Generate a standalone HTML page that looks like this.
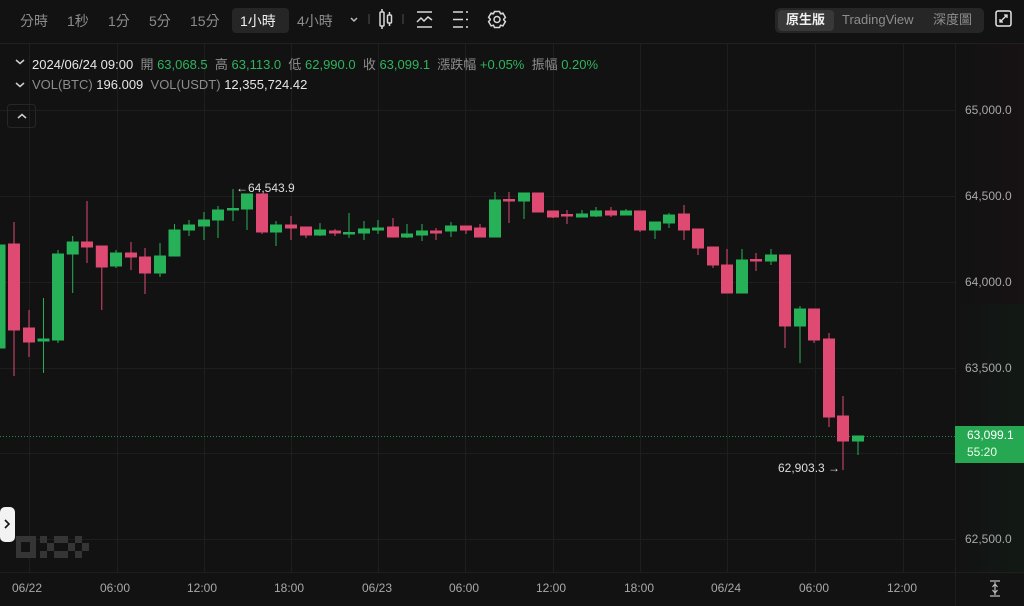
<!DOCTYPE html>
<html><head><meta charset="utf-8"><style>
*{margin:0;padding:0;box-sizing:border-box}
body{width:1024px;height:606px;background:#121212;overflow:hidden;position:relative;font-family:"Liberation Sans","Noto Sans CJK TC",sans-serif;color:#8a8a8a}
.a{position:absolute;white-space:nowrap}
.tb{font-size:14px;top:11px;color:#8d8d8d}
.inf{font-size:13px;color:#8d8d8d}
.w{color:#e6e6e6}.g{color:#2fb35e}
.ax{font-size:12px;color:#a8a8a8}
.sg{top:9px;height:21px;line-height:21px;font-size:13px;color:#8d8d8d}
</style></head><body>
<svg class="a" style="left:0;top:0" width="1024" height="606">
<defs><linearGradient id="rg" x1="0" x2="1"><stop offset="0" stop-color="#121212"/><stop offset="1" stop-color="#171214"/></linearGradient>
<linearGradient id="gg" x1="0" x2="1"><stop offset="0" stop-color="#121212"/><stop offset="1" stop-color="#121915"/></linearGradient></defs>
<rect x="955" y="44" width="69" height="260" fill="url(#rg)"/>
<rect x="955" y="304" width="69" height="270" fill="url(#gg)"/>
<line x1="0" y1="43.5" x2="1024" y2="43.5" stroke="#202020"/>
<g stroke="#1e1e1e" stroke-width="1">
<line x1="0" y1="110.5" x2="955" y2="110.5"/><line x1="0" y1="196.5" x2="955" y2="196.5"/><line x1="0" y1="282.5" x2="955" y2="282.5"/><line x1="0" y1="368.5" x2="955" y2="368.5"/><line x1="0" y1="453.5" x2="955" y2="453.5"/><line x1="0" y1="539.5" x2="955" y2="539.5"/>
<line x1="29.5" y1="44" x2="29.5" y2="572"/><line x1="117.5" y1="44" x2="117.5" y2="572"/><line x1="204.5" y1="44" x2="204.5" y2="572"/><line x1="291.5" y1="44" x2="291.5" y2="572"/><line x1="378.5" y1="44" x2="378.5" y2="572"/><line x1="465.5" y1="44" x2="465.5" y2="572"/><line x1="553.5" y1="44" x2="553.5" y2="572"/><line x1="640.5" y1="44" x2="640.5" y2="572"/><line x1="727.5" y1="44" x2="727.5" y2="572"/><line x1="815.5" y1="44" x2="815.5" y2="572"/><line x1="903.5" y1="44" x2="903.5" y2="572"/>
<line x1="955.5" y1="44" x2="955.5" y2="606"/><line x1="0" y1="572.5" x2="1024" y2="572.5"/>
</g>
<line x1="0" y1="436.5" x2="955" y2="436.5" stroke="#2fb35e" stroke-dasharray="1 2" opacity=".7"/>
<g stroke="#26b158" fill="#26b158">
<rect x="-3" y="245" width="8" height="103"/>
<line x1="43.5" y1="298" x2="43.5" y2="373"/><rect x="38" y="339" width="11" height="2"/>
<line x1="58" y1="250" x2="58" y2="343"/><rect x="52.5" y="254" width="11" height="86"/>
<line x1="72.7" y1="236" x2="72.7" y2="293"/><rect x="67.2" y="242" width="11" height="12"/>
<line x1="116" y1="250" x2="116" y2="268"/><rect x="110.5" y="253" width="11" height="13"/>
<line x1="160" y1="243" x2="160" y2="277"/><rect x="154.5" y="256" width="11" height="17"/>
<line x1="174.5" y1="224" x2="174.5" y2="256"/><rect x="169" y="230" width="11" height="26"/>
<line x1="189" y1="220" x2="189" y2="236"/><rect x="183.5" y="225" width="11" height="5"/>
<line x1="204" y1="212" x2="204" y2="240"/><rect x="198.5" y="220" width="11" height="6"/>
<line x1="218" y1="206" x2="218" y2="238"/><rect x="212.5" y="210" width="11" height="10"/>
<line x1="233" y1="189" x2="233" y2="221"/><rect x="227.5" y="208.5" width="11" height="1.5"/>
<line x1="247" y1="194" x2="247" y2="230"/><rect x="241.5" y="194" width="11" height="15"/>
<line x1="276" y1="221" x2="276" y2="246"/><rect x="270.5" y="225" width="11" height="7"/>
<line x1="320" y1="223" x2="320" y2="236"/><rect x="314.5" y="230" width="11" height="5"/>
<line x1="349" y1="213" x2="349" y2="238"/><rect x="343.5" y="232.5" width="11" height="1.5"/>
<line x1="364" y1="221" x2="364" y2="240"/><rect x="358.5" y="229" width="11" height="4"/>
<line x1="378" y1="220" x2="378" y2="234"/><rect x="372.5" y="228" width="11" height="2"/>
<line x1="407" y1="224" x2="407" y2="238"/><rect x="401.5" y="234" width="11" height="3"/>
<line x1="422" y1="224" x2="422" y2="241"/><rect x="416.5" y="231" width="11" height="4"/>
<line x1="451" y1="222" x2="451" y2="237"/><rect x="445.5" y="226" width="11" height="5"/>
<line x1="495" y1="192" x2="495" y2="237"/><rect x="489.5" y="200" width="11" height="37"/>
<line x1="524" y1="193" x2="524" y2="219"/><rect x="518.5" y="193" width="11" height="8"/>
<line x1="582" y1="210" x2="582" y2="217"/><rect x="576.5" y="214" width="11" height="3"/>
<line x1="596" y1="207" x2="596" y2="217"/><rect x="590.5" y="211" width="11" height="5"/>
<line x1="626" y1="209" x2="626" y2="215"/><rect x="620.5" y="211" width="11" height="4"/>
<line x1="655" y1="222" x2="655" y2="239"/><rect x="649.5" y="222" width="11" height="8"/>
<line x1="669" y1="213" x2="669" y2="228"/><rect x="663.5" y="215" width="11" height="8"/>
<line x1="742" y1="249" x2="742" y2="293"/><rect x="736.5" y="260" width="11" height="33"/>
<line x1="771" y1="249" x2="771" y2="265"/><rect x="765.5" y="255" width="11" height="6"/>
<line x1="800" y1="306" x2="800" y2="363"/><rect x="794.5" y="309" width="11" height="17"/>
<line x1="858" y1="436" x2="858" y2="455"/><rect x="852.5" y="436" width="11" height="5"/>
</g>
<g stroke="#df4a72" fill="#df4a72">
<line x1="14" y1="222" x2="14" y2="376"/><rect x="8.5" y="244" width="11" height="86"/>
<line x1="29" y1="310" x2="29" y2="357"/><rect x="23.5" y="328" width="11" height="14"/>
<line x1="87" y1="201" x2="87" y2="263"/><rect x="81.5" y="242" width="11" height="5"/>
<line x1="101.8" y1="246" x2="101.8" y2="310"/><rect x="96.3" y="246" width="11" height="21"/>
<line x1="131" y1="242" x2="131" y2="270"/><rect x="125.5" y="253" width="11" height="4"/>
<line x1="145" y1="248" x2="145" y2="294"/><rect x="139.5" y="257" width="11" height="16"/>
<line x1="262" y1="194" x2="262" y2="234"/><rect x="256.5" y="194" width="11" height="38"/>
<line x1="291" y1="216" x2="291" y2="240"/><rect x="285.5" y="225" width="11" height="3"/>
<line x1="306" y1="227" x2="306" y2="238"/><rect x="300.5" y="227" width="11" height="8"/>
<line x1="335" y1="229" x2="335" y2="236"/><rect x="329.5" y="231" width="11" height="2"/>
<line x1="393" y1="218" x2="393" y2="237"/><rect x="387.5" y="227" width="11" height="10"/>
<line x1="436" y1="228" x2="436" y2="240"/><rect x="430.5" y="231" width="11" height="2"/>
<line x1="466" y1="226" x2="466" y2="234"/><rect x="460.5" y="226" width="11" height="4"/>
<line x1="480" y1="224" x2="480" y2="237"/><rect x="474.5" y="228" width="11" height="9"/>
<line x1="509" y1="192" x2="509" y2="223"/><rect x="503.5" y="199.5" width="11" height="1.5"/>
<line x1="538" y1="193" x2="538" y2="212"/><rect x="532.5" y="193" width="11" height="19"/>
<line x1="553" y1="211" x2="553" y2="218"/><rect x="547.5" y="211" width="11" height="6"/>
<line x1="567" y1="210" x2="567" y2="224"/><rect x="561.5" y="214.5" width="11" height="1.5"/>
<line x1="611" y1="207" x2="611" y2="217"/><rect x="605.5" y="211" width="11" height="4"/>
<line x1="640" y1="211" x2="640" y2="232"/><rect x="634.5" y="211" width="11" height="19"/>
<line x1="684" y1="205" x2="684" y2="240"/><rect x="678.5" y="214" width="11" height="16"/>
<line x1="698" y1="229" x2="698" y2="255"/><rect x="692.5" y="229" width="11" height="19"/>
<line x1="713" y1="247" x2="713" y2="268"/><rect x="707.5" y="247" width="11" height="18"/>
<line x1="727" y1="249" x2="727" y2="293"/><rect x="721.5" y="265" width="11" height="28"/>
<line x1="756" y1="253" x2="756" y2="271"/><rect x="750.5" y="259.5" width="11" height="1.5"/>
<line x1="785" y1="255" x2="785" y2="348"/><rect x="779.5" y="255" width="11" height="71"/>
<line x1="814" y1="309" x2="814" y2="343"/><rect x="808.5" y="309" width="11" height="31"/>
<line x1="829" y1="333" x2="829" y2="427"/><rect x="823.5" y="339" width="11" height="78"/>
<line x1="843" y1="396" x2="843" y2="470"/><rect x="837.5" y="416" width="11" height="25"/>
</g>
<rect x="955" y="426" width="69" height="37" fill="#26a852"/>
<g fill="#353535"><rect x="16" y="536" width="20" height="22"/><rect x="40" y="536" width="7" height="7"/><rect x="40" y="551" width="7" height="7"/><rect x="47" y="543" width="7" height="8"/><rect x="54" y="536" width="7" height="7"/><rect x="54" y="551" width="7" height="7"/><rect x="61" y="536" width="7" height="7"/><rect x="61" y="551" width="7" height="7"/><rect x="68" y="543" width="7" height="8"/><rect x="75" y="536" width="7" height="7"/><rect x="75" y="551" width="7" height="7"/><rect x="82" y="543" width="7" height="8"/></g>
<rect x="21" y="542" width="9" height="10" fill="#121212"/>
<g stroke="#d8d8d8" fill="none" stroke-width="1.5">
<path d="M369 14v10" stroke="#3a3a3a"/>
<rect x="380" y="12" width="4" height="14" rx="1"/><path d="M382 9v3M382 26v3"/><rect x="387.5" y="15" width="4" height="8" rx="1"/><path d="M389.5 12v3M389.5 23v3"/>
<path d="M403 14v10" stroke="#3a3a3a"/>
<path d="M417 12h15M417 27h15M417 22l4-4 3 3 4-4 4 3"/>
<path d="M453 12h10M453 19.5h10M453 27h10M466 12h2M466 19.5h2M466 27h2"/>
<circle cx="497" cy="19.5" r="3"/>
<path d="M494.5 11.5h5l1 2.2 2.4-.6 2.5 4.3-1.7 1.8 0 .6 1.7 1.8-2.5 4.3-2.4-.6-1 2.2h-5l-1-2.2-2.4.6-2.5-4.3 1.7-1.8 0-.6-1.7-1.8 2.5-4.3 2.4.6z"/>
<path d="M351 18l3 3 3-3" stroke="#bbb"/>
</g>
<rect x="996" y="11" width="15" height="15" rx="2" fill="none" stroke="#e6e6e6" stroke-width="1.5"/>
<path d="M1000 22l7-7M1004 15h3v3M1000 19v3h3" stroke="#e6e6e6" stroke-width="1.3" fill="none"/>
<g stroke="#cfcfcf" stroke-width="1.5" fill="none">
<path d="M16 60l4 3.5 4-3.5M16 83l4 3.5 4-3.5"/>
<path d="M18 118l4-3.5 4 3.5"/>
</g>
<rect x="7.5" y="104.5" width="28" height="23" rx="3" fill="none" stroke="#262626"/>
<path d="M990 581h10M990 596h10M995 582v13M992.5 587l2.5-3 2.5 3M992.5 590l2.5 3 2.5-3" stroke="#bbb" stroke-width="1.2" fill="none"/>
<rect x="0" y="507" width="15" height="35" rx="5" fill="#f2f2f2"/>
<path d="M5 520l4 4-4 4" stroke="#111" stroke-width="1.6" fill="none"/>
</svg>
<div class="a" style="left:232px;top:8px;width:57px;height:25px;background:#262626;border-radius:4px"></div>
<span class="a tb" style="left:20px">分時</span>
<span class="a tb" style="left:67px">1秒</span>
<span class="a tb" style="left:108px">1分</span>
<span class="a tb" style="left:149px">5分</span>
<span class="a tb" style="left:190px">15分</span>
<span class="a tb" style="left:240px;color:#f0f0f0">1小時</span>
<span class="a tb" style="left:297px">4小時</span>
<div class="a" style="left:775px;top:8px;width:209px;height:25px;background:#262626;border-radius:5px"></div>
<div class="a" style="left:778px;top:10px;width:56px;height:21px;background:#383838;border-radius:4px"></div>
<span class="a sg" style="left:786px;color:#f0f0f0;font-weight:bold">原生版</span>
<span class="a sg" style="left:842px">TradingView</span>
<span class="a sg" style="left:933px">深度圖</span>
<div class="a inf" style="left:32px;top:54px"><span class="w">2024/06/24 09:00</span>&nbsp; 開 <span class="g">63,068.5</span>&nbsp; 高 <span class="g">63,113.0</span>&nbsp; 低 <span class="g">62,990.0</span>&nbsp; 收 <span class="g">63,099.1</span>&nbsp; 漲跌幅 <span class="g">+0.05%</span>&nbsp; 振幅 <span class="g">0.20%</span></div>
<div class="a inf" style="left:32px;top:77px">VOL(BTC) <span class="w">196.009</span>&nbsp; VOL(USDT) <span class="w">12,355,724.42</span></div>
<span class="a ax" style="left:248px;top:181px;color:#ddd">64,543.9</span>
<span class="a ax" style="left:236px;top:181px;color:#ddd">←</span>
<span class="a ax" style="left:778px;top:461px;color:#ddd">62,903.3 →</span>
<span class="a ax" style="left:965px;top:103px">65,000.0</span>
<span class="a ax" style="left:965px;top:189px">64,500.0</span>
<span class="a ax" style="left:965px;top:275px">64,000.0</span>
<span class="a ax" style="left:965px;top:361px">63,500.0</span>
<span class="a ax" style="left:967px;top:428px;color:#fff">63,099.1</span>
<span class="a ax" style="left:967px;top:445px;color:#e8ffe8">55:20</span>
<span class="a ax" style="left:965px;top:532px">62,500.0</span>
<span class="a ax" style="left:12px;top:581px">06/22</span>
<span class="a ax" style="left:100px;top:581px">06:00</span>
<span class="a ax" style="left:187px;top:581px">12:00</span>
<span class="a ax" style="left:274px;top:581px">18:00</span>
<span class="a ax" style="left:362px;top:581px">06/23</span>
<span class="a ax" style="left:449px;top:581px">06:00</span>
<span class="a ax" style="left:536px;top:581px">12:00</span>
<span class="a ax" style="left:624px;top:581px">18:00</span>
<span class="a ax" style="left:711px;top:581px">06/24</span>
<span class="a ax" style="left:799px;top:581px">06:00</span>
<span class="a ax" style="left:887px;top:581px">12:00</span>
</body></html>
